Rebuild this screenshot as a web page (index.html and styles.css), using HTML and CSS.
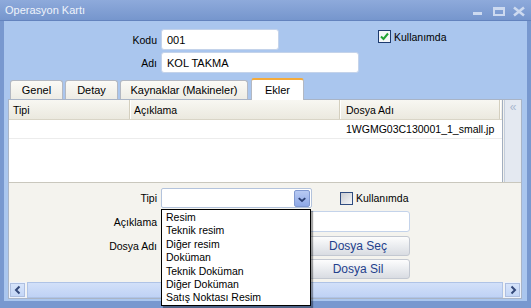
FILE: index.html
```html
<!DOCTYPE html>
<html lang="tr">
<head>
  <meta charset="UTF-8">
  <title>Operasyon Kartı</title>
  <link rel="stylesheet" href="styles.css">
</head>
<body>
  <div class="window">
    <div class="titlebar">
      <span class="title">Operasyon Kartı</span>
      <svg class="controls" width="56" height="20" viewBox="0 0 56 20">
        <rect x="2" y="12" width="9" height="3" fill="#cddaf0"/>
        <rect x="23" y="8" width="10" height="7" fill="none" stroke="#cddaf0" stroke-width="2"/>
        <rect x="22" y="7" width="12" height="3" fill="#cddaf0"/>
        <path d="M43 7.5 L53 15.5 M53 7.5 L43 15.5" stroke="#cddaf0" stroke-width="2.6"/>
      </svg>
    </div>

    <div class="frame">
      <div class="head">
        <div class="row">
          <span class="lbl">Kodu</span>
          <div class="input code">001</div>
          <span class="check top-check">
            <svg width="13" height="13" viewBox="0 0 13 13">
              <rect x="0.5" y="0.5" width="12" height="12" fill="#f4f6f8" stroke="#1d3a6e"/>
              <path d="M3 6.5 L5.5 9 L10 3.5" fill="none" stroke="#21a234" stroke-width="2"/>
            </svg>
            Kullanımda
          </span>
        </div>
        <div class="row">
          <span class="lbl">Adı</span>
          <div class="input name">KOL TAKMA</div>
        </div>
      </div>

      <div class="tabs">
        <div class="tab w-short">Genel</div>
        <div class="tab w-short">Detay</div>
        <div class="tab w-long">Kaynaklar (Makineler)</div>
        <div class="tab w-short active">Ekler</div>
      </div>

      <div class="panel">
        <div class="list">
          <div class="grid">
            <div class="grid-head">
              <div class="col c-type">Tipi</div>
              <div class="col c-desc">Açıklama</div>
              <div class="col c-file">Dosya Adı</div>
            </div>
            <div class="grid-row">
              <div class="col c-type"></div>
              <div class="col c-desc"></div>
              <div class="col c-file">1WGMG03C130001_1_small.jp</div>
            </div>
          </div>
          <div class="vscroll">«</div>
        </div>

        <div class="detail">
          <div class="drow">
            <span class="dlbl">Tipi</span>
            <div class="combo">
              <span class="combo-btn">
                <svg width="15" height="17" viewBox="0 0 15 17">
                  <path d="M4 7 L7.5 10 L11 7" fill="none" stroke="#2b3f72" stroke-width="2"/>
                </svg>
              </span>
            </div>
            <span class="check low-check">
              <span class="box"></span>
              Kullanımda
            </span>
          </div>
          <div class="drow">
            <span class="dlbl">Açıklama</span>
            <div class="input desc"></div>
          </div>
          <div class="drow">
            <span class="dlbl">Dosya Adı</span>
            <div class="input file"></div>
            <button class="btn">Dosya Seç</button>
          </div>
          <div class="drow">
            <span class="dlbl"></span>
            <div class="spacer"></div>
            <button class="btn">Dosya Sil</button>
          </div>

          <ul class="dropdown">
            <li>Resim</li>
            <li>Teknik resim</li>
            <li>Diğer resim</li>
            <li>Doküman</li>
            <li>Teknik Doküman</li>
            <li>Diğer Doküman</li>
            <li>Satış Noktası Resim</li>
          </ul>
        </div>

        <div class="hscroll">
          <span class="arrow">
            <svg width="10" height="10" viewBox="0 0 10 10">
              <path d="M6.5 1.5 L3 5 L6.5 8.5" fill="none" stroke="#34497a" stroke-width="2"/>
            </svg>
          </span>
          <span class="track"></span>
          <span class="arrow">
            <svg width="10" height="10" viewBox="0 0 10 10">
              <path d="M3.5 1.5 L7 5 L3.5 8.5" fill="none" stroke="#34497a" stroke-width="2"/>
            </svg>
          </span>
        </div>
      </div>
    </div>
  </div>
</body>
</html>
```

FILE: styles.css
```css
* {
  box-sizing: border-box;
}

body {
  margin: 0;
  font-family: "Liberation Sans", Arial, sans-serif;
  font-size: 10.5px;
  color: #000;
  background-color: #a9c5ee;
}

.window {
  width: 531px;
  height: 308px;
  display: flex;
  flex-direction: column;
  overflow: hidden;
}

.titlebar {
  height: 21px;
  flex: none;
  display: flex;
  align-items: center;
  justify-content: space-between;
  padding-left: 5px;
  padding-right: 4px;
  background: linear-gradient(#8eaadb, #7696cd);
  border-bottom: 1px solid #6383be;
  color: #eef3fb;
  font-size: 11px;
}

.frame {
  flex: 1;
  display: flex;
  flex-direction: column;
  background-color: #aac6ee;
  border: 4px solid #7898cf;
  border-top: 0;
  border-bottom-width: 7px;
  padding: 8px 0 0 4px;
}

.head {
  display: flex;
  flex-direction: column;
  gap: 2px;
}

.row,
.drow {
  display: flex;
  align-items: center;
}

.lbl {
  width: 149px;
  margin-right: 4px;
  text-align: right;
}

.input {
  height: 21px;
  display: flex;
  align-items: center;
  padding: 0 5px;
  background-color: #fff;
  border: 1px solid #c4d3ea;
  border-radius: 3px;
  font-size: 11px;
}

.input.code {
  width: 118px;
}

.input.name {
  width: 198px;
}

.check {
  display: flex;
  align-items: center;
  gap: 3px;
}

.top-check {
  margin-left: 99px;
  align-self: flex-start;
  margin-top: 1px;
}

/* tabs */
.tabs {
  height: 21px;
  margin-top: 5px;
  margin-left: 2px;
  display: flex;
  align-items: flex-end;
  gap: 2px;
  font-size: 11px;
}

.tab {
  height: 19px;
  display: flex;
  align-items: center;
  justify-content: center;
  background: linear-gradient(#fbfaf6, #edece5);
  border: 1px solid #b3b8c2;
  border-bottom: 0;
  border-radius: 3px 3px 0 0;
}

.w-short {
  width: 53px;
}

.w-long {
  width: 128px;
}

.tab.active {
  height: 22px;
  margin-left: 1px;
  margin-bottom: -1px;
  position: relative;
  z-index: 2;
  background: #fff;
  border-top: 2px solid #f5ab3b;
  padding-bottom: 1px;
}

/* panel */
.panel {
  width: 514px;
  height: 200px;
  display: flex;
  flex-direction: column;
  border: 1px solid #a9b4c6;
  background-color: #f4f3ee;
}

.list {
  height: 83px;
  flex: none;
  display: flex;
  border-bottom: 1px solid #c9c7bd;
}

.grid {
  width: 494px;
  background-color: #fff;
  border-right: 1px solid #a2aec0;
}

.grid-head {
  height: 20px;
  display: flex;
  background: linear-gradient(#f8f7f2, #ebe9df);
  border-bottom: 1px solid #d9d5c7;
}

.grid-row {
  height: 19px;
  display: flex;
  border-bottom: 1px solid #ececec;
}

.col {
  display: flex;
  align-items: center;
  padding-left: 4px;
}

.grid-head .col {
  border-right: 1px solid #d4cfbe;
  box-shadow: 1px 0 0 #fff;
}

.c-type {
  width: 121px;
}

.c-desc {
  width: 210px;
}

.c-file {
  width: 160px;
  padding-left: 6px;
}

.vscroll {
  flex: 1;
  margin-left: 1px;
  background-color: #e4e9f1;
  border-left: 1px solid #c3cddb;
  color: #a9b8cf;
  font-size: 12px;
  text-align: center;
  line-height: 14px;
}

.detail {
  height: 99px;
  flex: none;
  position: relative;
  display: flex;
  flex-direction: column;
  gap: 3px;
  padding-top: 5px;
}

.dlbl {
  width: 148px;
  margin-right: 4px;
  text-align: right;
}

.combo {
  width: 151px;
  height: 20px;
  display: flex;
  justify-content: flex-end;
  align-items: center;
  padding-right: 1px;
  background-color: #fff;
  border: 1px solid #b3c3dc;
  border-radius: 2px;
}

.combo-btn {
  width: 16px;
  height: 17px;
  display: flex;
  background: linear-gradient(#b8caf3, #8ea8e6);
  border: 1px solid #8199d0;
  border-radius: 2px;
}

.low-check {
  margin-left: 28px;
}

.box {
  width: 13px;
  height: 13px;
  background: linear-gradient(135deg, #c9ccd2, #f5f6f8);
  border: 1px solid #2f4c80;
}

.input.desc {
  width: 249px;
}

.input.file,
.spacer {
  width: 141px;
  margin-right: 4px;
}

.spacer {
  height: 20px;
}

.btn {
  width: 104px;
  height: 20px;
  padding: 0;
  font-family: "Liberation Sans", Arial, sans-serif;
  font-size: 12px;
  color: #23408c;
  background: linear-gradient(#fdfdfd, #eceef1 45%, #d9dce2);
  border: 1px solid #c3c8d1;
  border-radius: 3px;
}

.dropdown {
  position: absolute;
  left: 152px;
  top: 26px;
  width: 150px;
  margin: 0;
  padding: 1px 0 0 4px;
  list-style: none;
  background-color: #fff;
  border: 1px solid #000;
  box-shadow: 2px 2px 1px rgba(0, 0, 0, 0.35);
  z-index: 5;
}

.dropdown li {
  height: 13.4px;
  line-height: 13.4px;
}

.hscroll {
  height: 16px;
  flex: none;
  display: flex;
}

.arrow {
  width: 17px;
  display: flex;
  align-items: center;
  justify-content: center;
  background: linear-gradient(#d8e5fb, #c2d5f6);
  border: 1px solid #eef3fc;
  outline: 1px solid #aebfe0;
  outline-offset: -2px;
}

.track {
  flex: 1;
  margin: 0 1px;
  background: linear-gradient(#d2e0f9, #bfd2f5);
  border: 1px solid #afc3e6;
}
```
